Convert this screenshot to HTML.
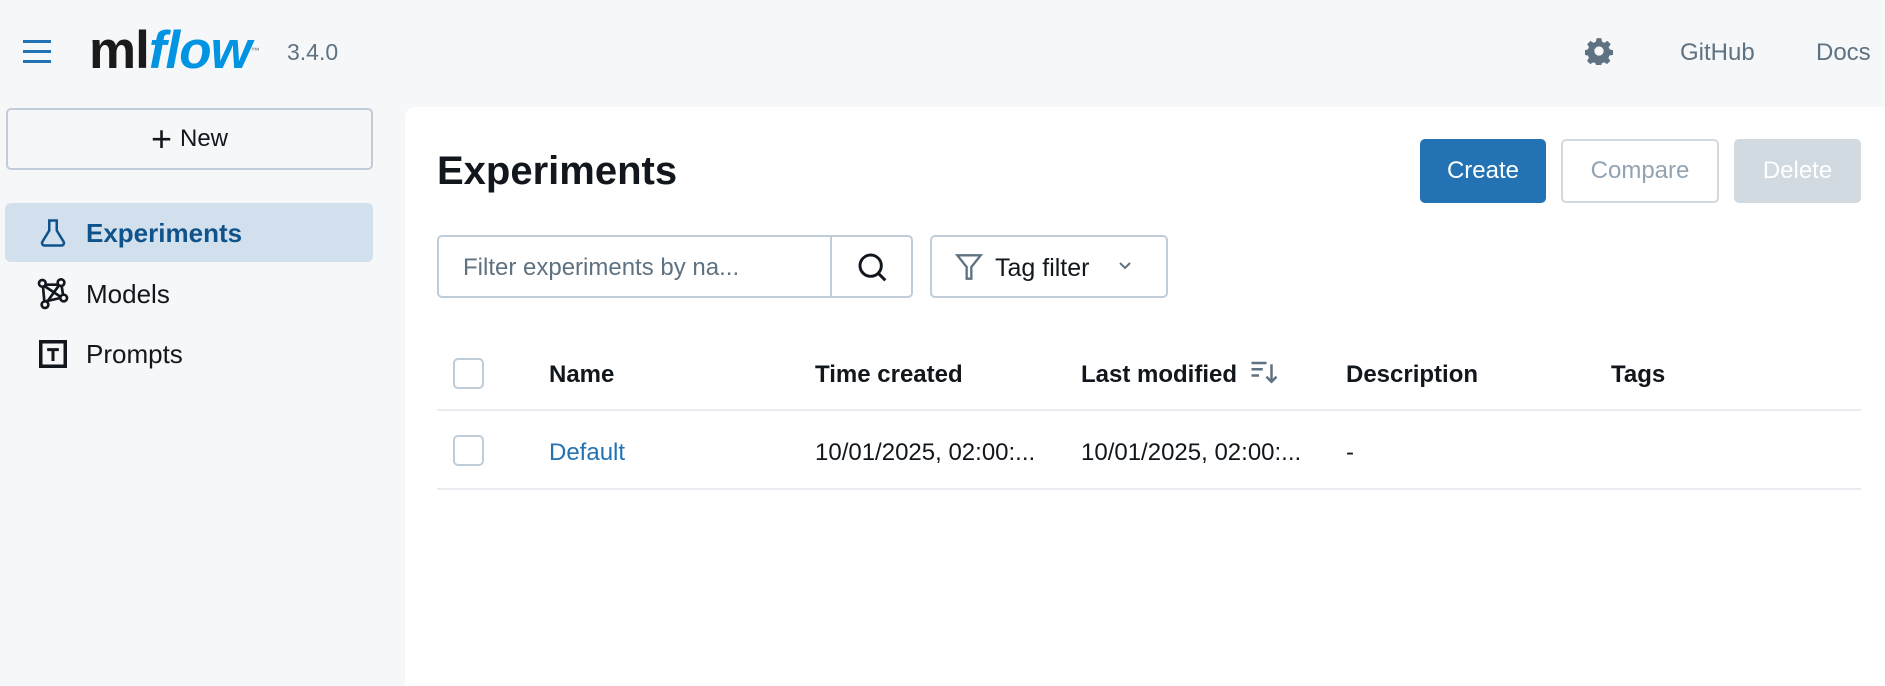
<!DOCTYPE html>
<html><head><meta charset="utf-8"><style>
*{box-sizing:border-box;margin:0;padding:0}
body{width:1885px;height:686px;overflow:hidden;background:#f6f7f9;font-family:"Liberation Sans",sans-serif;color:#11171c;position:relative}
.a{position:absolute}
.btn{position:absolute;border-radius:5px;display:flex;align-items:center;justify-content:center;font-size:24px}
.cb{position:absolute;width:31px;height:31px;border:2px solid #c0cdd8;border-radius:5px;background:#fff}
.th{position:absolute;top:361px;font-weight:bold;font-size:24px}
.td{position:absolute;top:439px;font-size:24px}
</style></head><body>
<div class="a" style="left:23px;top:40px;width:28px">
<div style="height:3px;background:#2272b4;margin-bottom:7px"></div><div style="height:3px;background:#2272b4;margin-bottom:7px"></div><div style="height:3px;background:#2272b4"></div></div>
<div class="a" style="left:89px;top:20px;font-size:53px;font-weight:bold;letter-spacing:-1px;line-height:62px"><span style="color:#1a1a1a">ml</span><span style="color:#0194e2;font-style:italic">flow</span><span style="font-size:9px;color:#888;vertical-align:top">™</span></div>
<div class="a" style="left:287px;top:39px;font-size:23px;color:#5f7281">3.4.0</div>
<svg class="a" style="left:1585px;top:37px" width="28" height="28" viewBox="0 0 24 24"><path fill="#5f7281" d="M10 1h4l.6 3 2 1 2.6-1.7 2.8 2.8L20.3 8.7l1 2 2.7.6v4l-3 .6-1 2 1.7 2.6-2.8 2.8-2.6-1.7-2 1-.6 3h-4l-.6-3-2-1-2.6 1.7-2.8-2.8 1.7-2.6-1-2-3-.6v-4l3-.6 1-2L1.9 6.1 4.7 3.3 7.3 5l2-1z"/><circle cx="12" cy="12" r="4" fill="#f6f7f9"/></svg>
<div class="a" style="left:1680px;top:39px;font-size:24px;color:#5f7281">GitHub</div>
<div class="a" style="left:1816px;top:39px;font-size:24px;color:#5f7281">Docs</div>
<div class="btn" style="left:6px;top:108px;width:367px;height:62px;border:2px solid #c0cdd8;background:#f6f7f9;font-size:24px"><span style="font-size:36px;font-weight:300;margin-right:8px;line-height:30px">+</span>New</div>
<div class="a" style="left:5px;top:203px;width:368px;height:59px;background:#d2e0ed;border-radius:6px"></div>
<svg class="a" style="left:38px;top:218px" width="30" height="30" viewBox="0 0 24 24" fill="none" stroke="#0e538b" stroke-width="2"><path d="M8 2h8M9 2v8L3.5 19a2 2 0 0 0 1.7 3h13.6a2 2 0 0 0 1.7-3L15 10V2"/></svg>
<div class="a" style="left:86px;top:218px;font-size:26px;font-weight:bold;color:#0e538b">Experiments</div>
<svg class="a" style="left:37px;top:277px" width="32" height="34" viewBox="0 0 24 24" fill="none" stroke="#11171c" stroke-width="2"><circle cx="4" cy="4" r="2.5"/><circle cx="18" cy="3.5" r="2.5"/><circle cx="20" cy="15" r="2.5"/><circle cx="6" cy="20" r="2.5"/><path d="M6 5l10 0M5.5 6l12 8M18.5 6l1 6.5M6.5 17.5L17.5 15M4.5 6.5l1 11M16.5 5.5L7.5 18"/></svg>
<div class="a" style="left:86px;top:279px;font-size:26px">Models</div>
<svg class="a" style="left:39px;top:340px" width="28" height="28" viewBox="0 0 24 24"><rect x="1.5" y="1.5" width="21" height="21" fill="none" stroke="#11171c" stroke-width="3"/><path d="M7 7h10v2.5h-3.7V18h-2.6V9.5H7z" fill="#11171c"/></svg>
<div class="a" style="left:86px;top:339px;font-size:26px">Prompts</div>
<div class="a" style="left:405px;top:107px;width:1480px;height:579px;background:#fff;border-radius:10px 0 0 0"></div>
<div class="a" style="left:437px;top:149px;font-size:40px;font-weight:bold">Experiments</div>
<div class="btn" style="left:1420px;top:139px;width:126px;height:64px;background:#2272b4;color:#fff">Create</div>
<div class="btn" style="left:1561px;top:139px;width:158px;height:64px;border:2px solid #d1d9e1;color:#92a4b3;background:#fff">Compare</div>
<div class="btn" style="left:1734px;top:139px;width:127px;height:64px;background:#d1d9e1;color:#fff">Delete</div>
<div class="a" style="left:437px;top:235px;width:476px;height:63px;border:2px solid #c0cdd8;border-radius:5px"></div>
<div class="a" style="left:830px;top:236px;width:2px;height:61px;background:#c0cdd8"></div>
<div class="a" style="left:463px;top:254px;font-size:24px;color:#5f7281">Filter experiments by na...</div>
<svg class="a" style="left:856px;top:251px" width="32" height="32" viewBox="0 0 24 24" fill="none" stroke="#11171c" stroke-width="2.2"><circle cx="11" cy="11" r="8"/><path d="M17 17l5 5"/></svg>
<div class="a" style="left:930px;top:235px;width:238px;height:63px;border:2px solid #c0cdd8;border-radius:5px"></div>
<svg class="a" style="left:955px;top:252px" width="28" height="30" viewBox="0 0 24 24" fill="none" stroke="#5f7281" stroke-width="2"><path d="M2 2h20l-8 10v10h-4V12z"/></svg>
<div class="a" style="left:995px;top:254px;font-size:25px">Tag filter</div>
<svg class="a" style="left:1117px;top:260px" width="16" height="12" viewBox="0 0 16 12" fill="none" stroke="#5f7281" stroke-width="2"><path d="M3 3l5 5 5-5"/></svg>
<div class="cb" style="left:453px;top:358px"></div>
<div class="th" style="left:549px">Name</div>
<div class="th" style="left:815px">Time created</div>
<div class="th" style="left:1081px">Last modified</div>
<svg class="a" style="left:1249px;top:358px" width="30" height="30" viewBox="0 0 24 24" fill="none" stroke="#5f7281" stroke-width="2"><path d="M2 4h12M2 9h9M2 14h6M18 5v14M14 15l4 4 4-4"/></svg>
<div class="th" style="left:1346px">Description</div>
<div class="th" style="left:1611px">Tags</div>
<div class="a" style="left:437px;top:409px;width:1424px;height:2px;background:#e8ecf0"></div>
<div class="cb" style="left:453px;top:435px"></div>
<div class="td" style="left:549px;color:#2272b4">Default</div>
<div class="td" style="left:815px">10/01/2025, 02:00:...</div>
<div class="td" style="left:1081px">10/01/2025, 02:00:...</div>
<div class="td" style="left:1346px">-</div>
<div class="a" style="left:437px;top:488px;width:1424px;height:2px;background:#e8ecf0"></div>
</body></html>
